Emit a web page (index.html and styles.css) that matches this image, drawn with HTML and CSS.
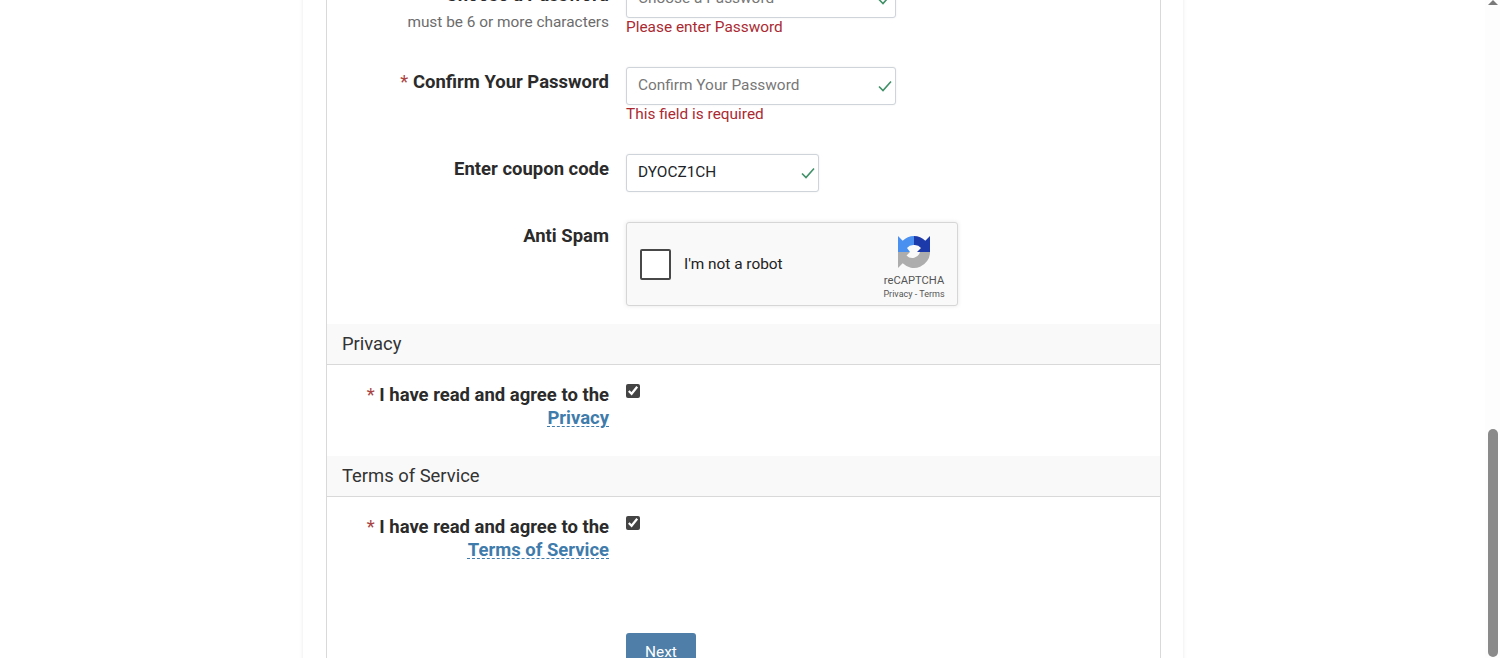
FILE: index.html
```html
<!DOCTYPE html>
<html lang="en">
<head>
<meta charset="utf-8">
<title>Register</title>
<link rel="stylesheet" href="styles.css">
</head>
<body>
<main class="card">
  <form class="panel">
    <div class="row row-password">
      <div class="label-col">
        <label class="label"><span class="req">*</span> Choose a Password</label>
        <div class="help">must be 6 or more characters</div>
      </div>
      <div class="field-col">
        <div class="input-wrap">
          <input class="input" type="text" placeholder="Choose a Password">
          <svg class="tick" viewBox="0 0 14 12"><path d="M1 6.5 5 10.5 13 1.5"/></svg>
        </div>
        <div class="error">Please enter Password</div>
      </div>
    </div>
    <div class="row row-confirm">
      <div class="label-col"><label class="label"><span class="req">*</span> Confirm Your Password</label></div>
      <div class="field-col">
        <div class="input-wrap">
          <input class="input" type="text" placeholder="Confirm Your Password">
          <svg class="tick" viewBox="0 0 14 12"><path d="M1 6.5 5 10.5 13 1.5"/></svg>
        </div>
        <div class="error">This field is required</div>
      </div>
    </div>
    <div class="row row-coupon">
      <div class="label-col"><label class="label">Enter coupon code</label></div>
      <div class="field-col">
        <div class="input-wrap short">
          <input class="input" type="text" value="DYOCZ1CH">
          <svg class="tick" viewBox="0 0 14 12"><path d="M1 6.5 5 10.5 13 1.5"/></svg>
        </div>
      </div>
    </div>
    <div class="row row-spam">
      <div class="label-col"><label class="label">Anti Spam</label></div>
      <div class="field-col">
        <div class="captcha">
          <span class="captcha-box"></span>
          <span class="captcha-text">I'm not a robot</span>
          <div class="captcha-brand">
            <svg class="captcha-logo" viewBox="0 0 34 34">
              <path fill="#adadad" d="M33 17A16 16 0 0 1 5.7 28.3L1 33V17H13L9.5 20.5A8 8 0 0 0 23 17Z"/>
              <path fill="#4a90f0" d="M17 1A16 16 0 0 0 5.7 5.7L1 1V17H13L10 13A8 8 0 0 1 17 10Z"/>
              <path fill="#1c3aa9" d="M17 1A16 16 0 0 1 28.3 5.7L33 1V17H20L24 13A8 8 0 0 0 17 10Z"/>
            </svg>
            <div class="captcha-name">reCAPTCHA</div>
            <div class="captcha-links">Privacy - Terms</div>
          </div>
        </div>
      </div>
    </div>
    <h2 class="section">Privacy</h2>
    <div class="row row-agree">
      <div class="label-col">
        <label class="label"><span class="req">*</span> I have read and agree to the <a class="link" href="#">Privacy</a></label>
      </div>
      <div class="field-col"><input class="check" type="checkbox" checked></div>
    </div>
    <h2 class="section">Terms of Service</h2>
    <div class="row row-agree">
      <div class="label-col">
        <label class="label"><span class="req">*</span> I have read and agree to the <a class="link" href="#">Terms of Service</a></label>
      </div>
      <div class="field-col"><input class="check" type="checkbox" checked></div>
    </div>
    <div class="row row-submit">
      <div class="label-col"></div>
      <div class="field-col"><button class="btn" type="button">Next</button></div>
    </div>
  </form>
</main>
<div class="scrollbar">
  <span class="scroll-up"></span>
  <span class="scroll-thumb"></span>
</div>
</body>
</html>
```
FILE: styles.css
```css
* { box-sizing: border-box; }
html, body { height: 658px; overflow: hidden; }
body {
  margin: 0;
  background: #fff;
  font-family: Roboto, "Liberation Sans", sans-serif;
  color: #212529;
  font-size: 15.4px;
}
.card {
  width: 880px;
  margin: -40px 0 0 303px;
  padding: 0 22px 0 23px;
  height: 900px;
  box-shadow: 0 0 4px rgba(0,0,0,.09);
}
.panel {
  border-left: 1px solid #d9d9d9;
  border-right: 1px solid #d9d9d9;
  height: 100%;
}
.row { display: flex; }
.label-col {
  width: 282px;
  text-align: right;
  flex: none;
}
.field-col { margin-left: 17px; flex: 1; }
.label {
  font-weight: 700;
  font-size: 18.48px;
  line-height: 23px;
  color: #2b2b2b;
  display: block;
}
.req { color: #a94442; font-weight: 400; }
.help { font-size: 15.4px; color: #6c6c6c; line-height: 20px; margin-top: 5px; }
.input-wrap { position: relative; width: 270px; height: 38px; }
.input-wrap.short { width: 193px; }
.input {
  display: block;
  width: 100%;
  height: 100%;
  border: 1px solid #ced4da;
  border-radius: 3px;
  padding: 0 11px 2px;
  font: 15.4px Roboto, "Liberation Sans", sans-serif;
  color: #212529;
  background: #fff;
  box-shadow: 0 0 2px rgba(0,0,0,.08);
}
.input::placeholder { color: #777; opacity: 1; }
.tick {
  position: absolute;
  right: 4px;
  top: 13px;
  width: 14px;
  height: 12px;
  fill: none;
  stroke: #3f9068;
  stroke-width: 1.6;
}
.error { color: #ab2a32; font-size: 15.4px; line-height: 20px; margin-top: -1px; }
.row-password { padding-top: 20px; height: 107px; }
.row-password .label { padding-top: 4px; }
.row-confirm { height: 87px; }
.row-confirm .label { padding-top: 4px; }
.row-coupon { height: 68px; }
.row-coupon .label { padding-top: 4px; }
.row-spam { height: 102px; }
.row-spam .label { padding-top: 3px; }
.captcha {
  width: 332px;
  height: 84px;
  background: #f9f9f9;
  border: 1px solid #d6d6d6;
  border-radius: 3px;
  box-shadow: 0 0 4px rgba(0,0,0,.1);
  display: flex;
  align-items: center;
  position: relative;
  padding-left: 13px;
}
.captcha-box {
  width: 31px;
  height: 31px;
  background: #fff;
  border: 2px solid #484848;
  border-radius: 2px;
  flex: none;
}
.captcha-text { margin-left: 13px; font-size: 15.4px; color: #222; }
.captcha-brand {
  position: absolute;
  right: 8px;
  top: 12px;
  width: 70px;
  text-align: center;
}
.captcha-logo { display: block; width: 34px; height: 34px; margin: 0 auto; }
.captcha-name { font-size: 11.2px; color: #555; line-height: 12px; margin-top: 6px; }
.captcha-links { font-size: 9px; color: #555; line-height: 10px; margin-top: 2px; }
.section {
  margin: 0;
  height: 41px;
  background: #f9f9f9;
  border-bottom: 1px solid #d9d9d9;
  font-weight: 400;
  font-size: 18.4px;
  line-height: 39px;
  padding-left: 15px;
  color: #333;
}
.row-agree { height: 91px; padding-top: 19px; }
.row-agree .label { padding-left: 30px; }
.link {
  color: #3f7cac;
  text-decoration: underline dashed 1px;
  text-underline-offset: 2px;
}
.check {
  display: block;
  margin: 0;
  width: 14px;
  height: 14px;
  accent-color: #444;
}
.row-submit { padding-top: 45px; }
.btn {
  width: 70px;
  height: 38px;
  background: #4f7fa8;
  color: #fff;
  border: 0;
  border-radius: 3px;
  font: 15.4px Roboto, "Liberation Sans", sans-serif;
}
.scrollbar {
  position: absolute;
  top: 0;
  right: 0;
  width: 15px;
  height: 658px;
  background: #fdfdfd;
}
.scroll-up {
  position: absolute;
  top: 0;
  left: 3px;
  border-left: 5px solid transparent;
  border-right: 5px solid transparent;
  border-bottom: 5px solid #7a7a7a;
}
.scroll-thumb {
  position: absolute;
  top: 429px;
  left: 3px;
  width: 10px;
  height: 228px;
  background: #8a8a8a;
  border-radius: 5px;
}
```
